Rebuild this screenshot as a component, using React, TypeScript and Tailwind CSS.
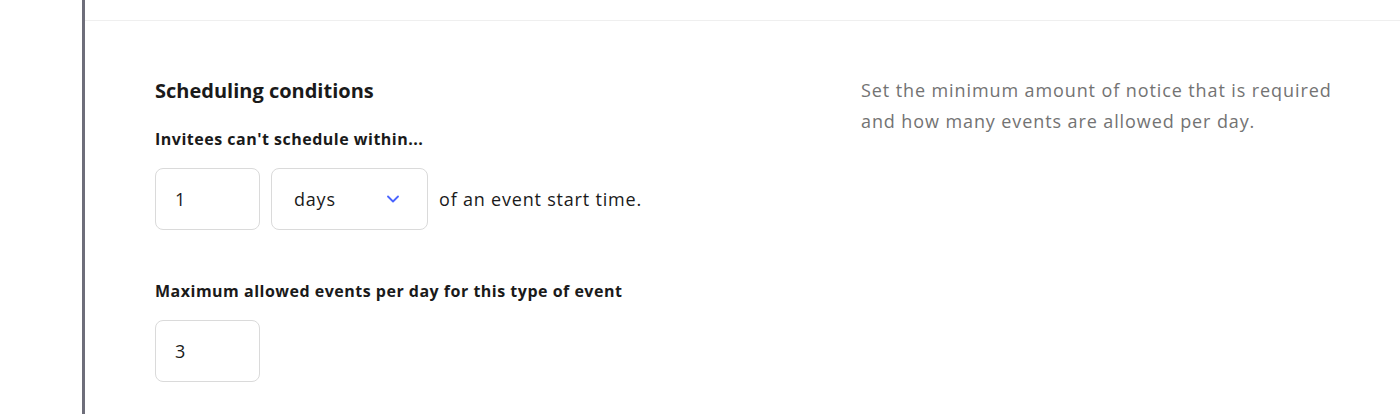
const font = { fontFamily: "'Open Sans', Lato, sans-serif" };

const NumberBox = ({ value }: { value: string }) => (
  <div className="flex h-[62px] w-[105px] items-center rounded-lg border border-[#dadada] bg-white pl-[19px] text-[18px] tracking-[0.8px] text-[#1a1a1a]">
    {value}
  </div>
);

const App = () => {
  return (
    <div
      className="flex h-[414px] w-[1400px] bg-white text-[#1a1a1a]"
      style={font}
    >
      <div className="w-[82px] shrink-0" />
      <div className="w-[3px] shrink-0 bg-[#6e6e7a]" />
      <div className="flex-1">
        <div className="h-[21px] border-b border-[#efefef]" />
        <div className="flex pl-[70px] pt-[57px]">
          <div className="w-[706px] shrink-0">
            <h2 className="text-[20px] font-bold leading-[25px]">
              Scheduling conditions
            </h2>
            <p className="mt-[26px] text-[16px] font-bold leading-[20px] tracking-[0.5px]">
              Invitees can't schedule within...
            </p>
            <div className="mt-[19px] flex items-center gap-[11px]">
              <NumberBox value="1" />
              <div className="flex h-[62px] w-[157px] items-center justify-between rounded-lg border border-[#dadada] bg-white pl-[22px] pr-[28px] text-[18px] tracking-[0.8px]">
                <span>days</span>
                <svg width="12" height="8" viewBox="0 0 12 8" fill="none">
                  <path
                    d="M1 1.5l5 5 5-5"
                    stroke="#4a64ff"
                    strokeWidth="1.8"
                    strokeLinecap="round"
                    strokeLinejoin="round"
                  />
                </svg>
              </div>
              <span className="text-[18px] tracking-[0.8px]">
                of an event start time.
              </span>
            </div>
            <p className="mt-[51px] text-[16px] font-bold leading-[20px] tracking-[0.5px]">
              Maximum allowed events per day for this type of event
            </p>
            <div className="mt-[19px]">
              <NumberBox value="3" />
            </div>
          </div>
          <p className="-mt-[3px] w-[490px] text-[18px] leading-[31px] tracking-[0.9px] text-[#737373]">
            Set the minimum amount of notice that is required and how many
            events are allowed per day.
          </p>
        </div>
      </div>
    </div>
  );
};

export default App;
